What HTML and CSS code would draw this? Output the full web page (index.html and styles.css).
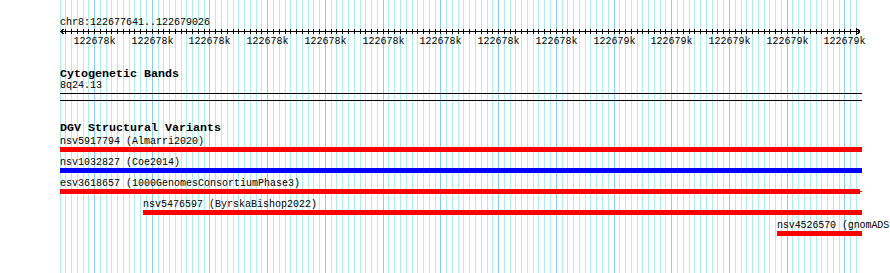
FILE: index.html
```html
<!DOCTYPE html>
<html lang="en">
<head>
    <meta charset="UTF-8">
    <title>chr8:122677641..122679026</title>
    <link rel="stylesheet" href="styles.css">
</head>
<body>

<svg class="grid" id="grid" width="890" height="273"></svg>

<div class="panel">
    <div class="locus">chr8:122677641..122679026</div>
    <svg class="ruler" id="ruler" width="802" height="17"></svg>

    <div class="track cyto">
        <div class="track-title">Cytogenetic Bands</div>
        <div class="band-label">8q24.13</div>
    </div>

    <div class="divider"></div>

    <div class="track dgv">
        <div class="track-title">DGV Structural Variants</div>

        <div class="feature">
            <div class="feature-name">nsv5917794 (Almarri2020)</div>
            <div class="feature-bar"></div>
        </div>
        <div class="feature">
            <div class="feature-name">nsv1032827 (Coe2014)</div>
            <div class="feature-bar loss"></div>
        </div>
        <div class="feature">
            <div class="feature-name">esv3618657 (1000GenomesConsortiumPhase3)</div>
            <div class="feature-bar clipped"></div>
        </div>
        <div class="feature" style="margin-left: 83px">
            <div class="feature-name">nsv5476597 (ByrskaBishop2022)</div>
            <div class="feature-bar"></div>
        </div>
        <div class="feature" style="margin-left: 717px">
            <div class="feature-name edge">nsv4526570 (gnomADS</div>
            <div class="feature-bar"></div>
        </div>
    </div>
</div>

<script>
    const NS = 'http://www.w3.org/2000/svg';
    const viewStart = 122677641;
    const viewEnd = 122679026;
    const left = 60;
    const scale = 800 / (viewEnd - viewStart + 1);

    function px(bp) {
        return (bp - viewStart) * scale;
    }

    function line(svg, x1, y1, x2, y2, cls) {
        const el = document.createElementNS(NS, 'line');
        el.setAttribute('x1', x1);
        el.setAttribute('y1', y1);
        el.setAttribute('x2', x2);
        el.setAttribute('y2', y2);
        if (cls) el.setAttribute('class', cls);
        svg.appendChild(el);
    }

    // grid behind the tracks
    const grid = document.getElementById('grid');
    line(grid, left + 0.5, 0, left + 0.5, 273, 'minor');
    for (let bp = Math.ceil(viewStart / 10) * 10; bp <= viewEnd; bp += 10) {
        const x = Math.round(left + px(bp)) + 0.5;
        line(grid, x, 0, x, 273, bp % 100 === 0 ? 'major' : 'minor');
    }

    // ruler: line, arrows, ticks, labels
    const ruler = document.getElementById('ruler');
    line(ruler, 0, 2.5, 800, 2.5);
    line(ruler, 0.5, 2.5, 4.5, -0.5);
    line(ruler, 0.5, 2.5, 4.5, 5.5);
    line(ruler, 800.5, 2.5, 796.5, -0.5);
    line(ruler, 800.5, 2.5, 796.5, 5.5);
    for (let bp = Math.ceil(viewStart / 10) * 10; bp <= viewEnd; bp += 10) {
        const x = Math.round(px(bp)) + 0.5;
        line(ruler, x, 0, x, 5);
        if (bp % 100 === 0) {
            const label = document.createElementNS(NS, 'text');
            label.setAttribute('x', x);
            label.setAttribute('y', 15);
            label.textContent = Math.round((bp - 1) / 1000) + 'k';
            ruler.appendChild(label);
        }
    }
</script>

</body>
</html>
```

FILE: styles.css
```css
html, body {
    margin: 0;
    height: 100%;
    overflow: hidden;
    background-color: #fff;
}
body {
    font-family: "Liberation Mono", "DejaVu Sans Mono", monospace;
    font-size: 10px;
    color: #000;
    position: relative;
}
.grid {
    position: absolute;
    left: 0;
    top: 0;
    shape-rendering: crispEdges;
}
.grid line {
    stroke-width: 1;
}
.grid line.minor {
    stroke: #afeeee;
}
.grid line.major {
    stroke: #87cefa;
}
.panel {
    position: relative;
    margin-left: 60px;
    width: 802px;
    padding-top: 16px;
}
.locus {
    height: 13px;
    line-height: 13px;
}
.ruler {
    display: block;
    overflow: visible;
    shape-rendering: crispEdges;
}
.ruler line {
    stroke: #000;
    stroke-width: 1;
}
.ruler text {
    font-family: "Liberation Mono", monospace;
    font-size: 10px;
    text-anchor: middle;
    fill: #000;
}
.track-title {
    font-weight: bold;
    font-size: 11.67px;
    height: 13px;
    line-height: 13px;
}
.cyto {
    margin-top: 22px;
}
.band-label {
    height: 10px;
    line-height: 10px;
}
.divider {
    margin-top: 2px;
    height: 6px;
    border-top: 1px solid #000;
    border-bottom: 1px solid #000;
}
.dgv {
    margin-top: 21px;
}
.dgv .track-title {
    margin-bottom: 2px;
}
.feature {
    display: flex;
    flex-direction: column;
    margin-bottom: 6px;
}
.feature-name {
    height: 10px;
    line-height: 10px;
    white-space: nowrap;
}
.feature-name.edge {
    letter-spacing: -0.1px;
}
.feature-bar {
    height: 5px;
    background-color: #ff0000;
}
.feature-bar.loss {
    background-color: #0000ff;
}
.feature-bar.clipped {
    position: relative;
    margin-right: 2px;
}
.feature-bar.clipped::after {
    content: "";
    position: absolute;
    right: -2px;
    top: 2px;
    width: 2px;
    height: 1px;
    background-color: #ff0000;
}
```
